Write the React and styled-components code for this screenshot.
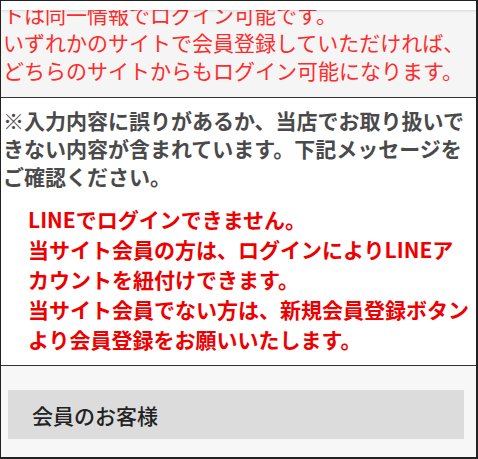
import React from 'react'
import styled, { createGlobalStyle } from 'styled-components'

const GlobalStyle = createGlobalStyle`
    html, body {
        margin: 0;
        padding: 0;
        background: #ffffff;
    }
    body {
        font-family: "Noto Sans CJK JP", "Noto Sans", sans-serif;
    }
`

const Frame = styled.div`
    position: relative;
    box-sizing: border-box;
    width: 478px;
    height: 459px;
    overflow: hidden;
    background: #f7f7f7;
    border-top: 1px solid #222;
    border-left: 1px solid #222;
    border-right: 2px solid #222;
    border-bottom: 2px solid #222;
`

const HeaderEdge = styled.div`
    position: absolute;
    top: 0;
    left: 0;
    right: 0;
    height: 9px;
    background: #ffffff;
    box-shadow: 0 1px 3px rgba(0, 0, 0, 0.12);
    z-index: 2;
`

const Notice = styled.div`
    margin-top: -3px;
    padding: 2px 0 13px 2px;
    background: #f5f5f5;
    color: #ff2b2b;
    font-size: 21px;
    line-height: 28px;
    white-space: nowrap;
`

const ErrorBox = styled.div`
    background: #ffffff;
    border-top: 1px solid #333;
    border-bottom: 1px solid #333;
    padding: 8px 0 11px 2px;
    white-space: nowrap;
`

const ErrorLead = styled.p`
    margin: 0;
    color: #4a4a4a;
    font-size: 21px;
    font-weight: bold;
    line-height: 28px;
`

const ErrorMessages = styled.div`
    margin-top: 14px;
    padding-left: 25px;
    color: #ee0000;
    font-size: 21px;
    font-weight: bold;
    line-height: 30px;
`

const Message = styled.p`
    margin: 0;
`

const Members = styled.div`
    padding: 24px 12px 0 7px;
`

const SectionButton = styled.div`
    display: flex;
    align-items: center;
    height: 49px;
    padding-left: 24px;
    background: #dcdcdc;
    color: #222;
    font-size: 21px;
    font-weight: 500;
`

const App = () => {
    return (
        <>
            <GlobalStyle />
            <Frame>
                <HeaderEdge />
                <Notice>
                    トは同一情報でログイン可能です。<br />
                    いずれかのサイトで会員登録していただければ、<br />
                    どちらのサイトからもログイン可能になります。
                </Notice>
                <ErrorBox>
                    <ErrorLead>
                        ※入力内容に誤りがあるか、当店でお取り扱いで<br />
                        きない内容が含まれています。下記メッセージを<br />
                        ご確認ください。
                    </ErrorLead>
                    <ErrorMessages>
                        <Message>LINEでログインできません。</Message>
                        <Message>
                            当サイト会員の方は、ログインによりLINEア<br />
                            カウントを紐付けできます。
                        </Message>
                        <Message>
                            当サイト会員でない方は、新規会員登録ボタン<br />
                            より会員登録をお願いいたします。
                        </Message>
                    </ErrorMessages>
                </ErrorBox>
                <Members>
                    <SectionButton>会員のお客様</SectionButton>
                </Members>
            </Frame>
        </>
    )
}

export default App
